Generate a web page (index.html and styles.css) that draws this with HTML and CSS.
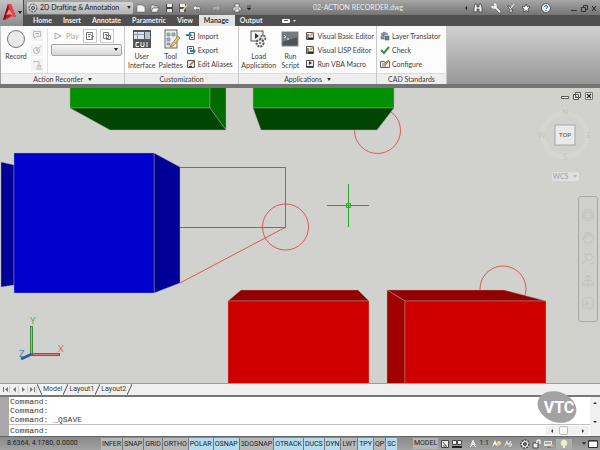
FILE: index.html
```html
<!DOCTYPE html>
<html lang="en">
<head>
    <meta charset="UTF-8">
    <meta name="viewport" content="width=device-width, initial-scale=1.0">
    <title>02-ACTION RECORDER.dwg</title>
    <link rel="stylesheet" href="styles.css">
</head>
<body>

    <header class="header">
        <button class="app-button" aria-label="Application menu">
            <svg width="24" height="25" viewBox="0 0 24 25">
                <path d="M3 19 L8 3 L11 3 L16 16 L12 15 L5 19 Z" fill="#c8202c"/>
                <path d="M3 19 L8 3 L9 10 L6 17 Z" fill="#8e0f18"/>
                <path d="M8 3 L11 3 L16 16 L12 15 Z" fill="#e8434c"/>
                <path d="M6 14 L9 8 L13 15 L10 13 Z" fill="#f4969a"/>
                <path d="M18 10 h4 l-2 3 z" fill="#222"/>
            </svg>
        </button>
        <div class="header-rows">
            <div class="titlebar">
                <div class="workspace">
                    <svg width="10" height="10" viewBox="0 0 10 10" fill="none" stroke="#555"><circle cx="5" cy="5" r="4" stroke-dasharray="2 1"/><circle cx="5" cy="5" r="1.5"/></svg>
                    <select aria-label="Workspace"><option>2D Drafting &amp; Annotation</option></select>
                    <svg width="6" height="4" viewBox="0 0 6 4"><path d="M1 0 h4 l-2 3 z" fill="#333"/></svg>
                </div>
                <div class="quick-access">
                    <button aria-label="New"><svg width="10" height="10" viewBox="0 0 10 10"><path d="M1 2 h5 l3 2 v5 h-8 z" fill="#f2f2f2" stroke="#555" stroke-width=".5"/></svg></button>
                    <button aria-label="Open"><svg width="10" height="10" viewBox="0 0 10 10"><path d="M1 2 h3 l1 1 h3 v2 h-5 l-2 4 z" fill="#ddd" stroke="#444" stroke-width=".5"/><path d="M3 5 h6 l-2 4 h-6 z" fill="#f6f6f6" stroke="#444" stroke-width=".5"/></svg></button>
                    <button aria-label="Save"><svg width="10" height="10" viewBox="0 0 10 10"><rect x="2" y="1" width="7" height="8" fill="#444"/><rect x="3" y="1" width="5" height="3" fill="#eee"/><rect x="3" y="6" width="5" height="3" fill="#ddd"/></svg></button>
                    <button aria-label="Save as"><svg width="10" height="10" viewBox="0 0 10 10"><rect x="1" y="1" width="7" height="8" fill="#555"/><rect x="2" y="1" width="5" height="3" fill="#eee"/><rect x="2" y="6" width="4" height="3" fill="#ddd"/><path d="M5 7 L9 2" stroke="#e6d08a" stroke-width="1.5"/></svg></button>
                    <button aria-label="Undo"><svg width="10" height="10" viewBox="0 0 10 10"><path d="M1 5 L4 2 V4 H8 V8 H7 V6 H4 V8 Z" fill="#f2f2f2" stroke="#555" stroke-width=".5"/></svg></button>
                    <button aria-label="Redo" class="faded"><svg width="10" height="10" viewBox="0 0 10 10"><path d="M9 5 L6 2 V4 H2 V7 H3 V6 H6 V8 Z" fill="#aaa"/></svg></button>
                    <button aria-label="Plot"><svg width="10" height="10" viewBox="0 0 10 10"><path d="M3 4 V1 H7 V4" fill="#fff" stroke="#444" stroke-width=".6"/><rect x="1" y="4" width="8" height="4" rx="1" fill="#eee" stroke="#444" stroke-width=".6"/><rect x="3" y="6" width="4" height="3" fill="#fff" stroke="#444" stroke-width=".6"/></svg></button>
                    <svg width="6" height="6" viewBox="0 0 6 6"><path d="M1 1 h4 M1 3 h4 l-2 2 z" fill="#222" stroke="#222" stroke-width=".6"/></svg>
                </div>
                <h1 class="doc-title">02-ACTION RECORDER.dwg</h1>
                <div class="info-center">
                    <svg width="4" height="6" viewBox="0 0 4 6"><path d="M3 1 v4 l-2 -2 z" fill="#222"/></svg>
                    <button aria-label="Search" class="search"><svg width="10" height="10" viewBox="0 0 10 10"><path d="M1 9 V5 L2 1 H4 V4 H6 V1 H8 L9 5 V9 H6 V6 H4 V9 Z" fill="#eee" stroke="#333" stroke-width=".7"/></svg></button>
                    <button aria-label="Subscription"><svg width="10" height="10" viewBox="0 0 10 10"><path d="M9 9 L4 4" stroke="#444" stroke-width="3"/><path d="M9 9 L3 3" stroke="#f4f4f4" stroke-width="2"/><path d="M1 3 A2 2 0 1 0 3 1" fill="none" stroke="#f4f4f4" stroke-width="1.5"/></svg></button>
                    <button aria-label="Communication"><svg width="10" height="10" viewBox="0 0 10 10"><path d="M2 2 Q2 7 7 7 Z M4 7 L3 9 H7 L6 7" fill="#f4f4f4" stroke="#333" stroke-width=".6"/><path d="M5 5 L8 1" stroke="#f4f4f4"/></svg></button>
                    <button aria-label="Favorites"><svg width="10" height="10" viewBox="0 0 10 10"><path d="M5 1 L6.200 3.700 L9 4 L7 6 L7.500 9 L5 7.500 L2.500 9 L3 6 L1 4 L3.800 3.700 Z" fill="#fff" stroke="#333" stroke-width=".7"/></svg></button>
                    <button aria-label="Help" class="help"><svg width="10" height="10" viewBox="0 0 10 10"><circle cx="5" cy="5" r="4.500" fill="#eef3f8" stroke="#456"/><path d="M3.500 4 Q3.500 2.500 5 2.500 T6.500 4 Q6.500 4.800 5 5.500 V6 M5 7 V8" fill="none" stroke="#2b5a8c"/></svg></button>
                    <div class="window-buttons">
                        <button aria-label="Minimize"><svg width="8" height="8" viewBox="0 0 8 8"><path d="M1 6.500 H7" stroke="#333"/></svg></button>
                        <button aria-label="Restore"><svg width="8" height="8" viewBox="0 0 8 8" fill="none" stroke="#333"><path d="M1.500 3.500 h4 v4 h-4 z M3.500 3 V1.500 H7.500 V5.500 H6"/></svg></button>
                        <button aria-label="Close"><svg width="8" height="8" viewBox="0 0 8 8"><path d="M2 2 L6 7 M6 2 L2 7" stroke="#222"/></svg></button>
                    </div>
                </div>
            </div>
            <nav class="ribbon-tabs">
                <a href="#">Home</a>
                <a href="#">Insert</a>
                <a href="#">Annotate</a>
                <a href="#">Parametric</a>
                <a href="#">View</a>
                <a href="#" class="active">Manage</a>
                <a href="#">Output</a>
                <button aria-label="Minimize ribbon"><svg width="16" height="6" viewBox="0 0 16 6"><rect x="1" y="1" width="8" height="4" rx="1" fill="#fff"/><rect x="3" y="2" width="4" height="1" fill="#555"/><path d="M12 2 h3 l-1.500 2 z" fill="#ddd"/></svg></button>
            </nav>
        </div>
    </header>

    <section class="ribbon">
        <div class="panel recorder">
            <div class="panel-body">
                <button class="large">
                    <svg width="20" height="20" viewBox="0 0 20 20"><circle cx="10" cy="10" r="8.500" fill="#e9e9e9" stroke="#777"/></svg>
                    <span>Record</span>
                </button>
                <div class="record-tools">
                    <button aria-label="Insert message"><svg width="10" height="10" viewBox="0 0 10 10" fill="none" stroke="#bbb"><path d="M1.500 1.500 h7 v5 h-4 l-2 2 v-2 h-1 z M3 3.500 h4"/></svg></button>
                    <button aria-label="Insert base point"><svg width="10" height="10" viewBox="0 0 10 10" fill="none" stroke="#bbb"><circle cx="4.500" cy="5.500" r="3"/><path d="M5 5 L9 1 M5 3 v3 h2"/></svg></button>
                    <button aria-label="Pause for input"><svg width="10" height="10" viewBox="0 0 10 10" fill="none" stroke="#bbb"><path d="M1 1.500 h6 v3 M6 5 l-1 2 h4 l-1 -2 z M4 9 h6"/></svg></button>
                </div>
                <div class="playback">
                    <div class="play-row">
                        <button class="play"><svg width="8" height="8" viewBox="0 0 8 8"><path d="M1 1 L7 4 L1 7 Z" fill="none" stroke="#aaa"/></svg> Play</button>
                        <button class="boxed" aria-label="Preference"><svg width="10" height="10" viewBox="0 0 10 10" fill="none" stroke="#777"><path d="M1.500 1.500 h6 v7 h-6 z M3 3.500 h3 M3 5.500 h2 M7 9 V4 L9 6"/></svg></button>
                        <button class="boxed" aria-label="Manage action macros"><svg width="10" height="10" viewBox="0 0 10 10" fill="none" stroke="#777"><path d="M1.500 1.500 h5 v6 h-5 z M3 3.500 h2 M4.500 4.500 h4 v4 h-4 z M6 6.500 h1"/></svg></button>
                    </div>
                    <div class="macro"><select aria-label="Available action macro"><option></option></select><svg width="6" height="4" viewBox="0 0 6 4"><path d="M1 0 h4 l-2 3 z" fill="#222"/></svg></div>
                </div>
            </div>
            <div class="panel-title">Action Recorder <i class="drop"></i></div>
        </div>

        <div class="panel custom">
            <div class="panel-body">
                <button class="large">
                    <svg width="20" height="20" viewBox="0 0 20 20"><rect x="1" y="1" width="18" height="18" fill="#555"/><rect x="2" y="3" width="10" height="7" fill="#dce3ea"/><rect x="13" y="3" width="5" height="7" fill="#b9c2cb"/><path d="M2 5.500 h10 M5.500 3 v7" stroke="#8a97a5"/><path d="M7 13.500 H4 V17.500 H7 M9 13 V17.500 H12 V13 M15 13 V18" fill="none" stroke="#fff"/></svg>
                    <span>User<br>Interface</span>
                </button>
                <button class="large">
                    <svg width="20" height="20" viewBox="0 0 20 20"><rect x="4" y="1" width="12" height="18" fill="#edf0f3" stroke="#666"/><path d="M6 4 h3 v3 h-3 z M11 4 h3 v3 h-3 z M6 9 h3 v3 h-3 z M6 14 h3 v2 h-3 z" fill="#9fb4c8" stroke="#66788a" stroke-width=".6"/><path d="M10 16 L17 7 L19 9 L12 17 L9 18 Z" fill="#efc56c" stroke="#896827" stroke-width=".7"/></svg>
                    <span>Tool<br>Palettes</span>
                </button>
                <div class="small-list">
                    <button><svg width="10" height="10" viewBox="0 0 10 10"><path d="M3.500 1.500 h5 v7 h-5 z" fill="#e7ecf0" stroke="#666"/><path d="M5 6.500 h2" stroke="#555"/><path d="M0 3 h3 v-2 l3 3 l-3 3 v-2 h-3 z" fill="#2d7fb8"/></svg>Import</button>
                    <button><svg width="10" height="10" viewBox="0 0 10 10"><path d="M1.500 1.500 h6 v7 h-6 z" fill="#e7ecf0" stroke="#666"/><path d="M3 3.500 h3" stroke="#555"/><path d="M4 5 h3 v-2 l3 3 l-3 3 v-2 h-3 z" fill="#2d7fb8"/></svg>Export</button>
                    <button><svg width="10" height="10" viewBox="0 0 10 10"><path d="M1.500 1.500 h7 v7 h-7 z" fill="#e7e7e7" stroke="#555"/><path d="M3 7.500 h3" stroke="#333"/><path d="M4 6 L9 1" stroke="#9a7a3d" stroke-width="1.500"/></svg>Edit Aliases</button>
                </div>
            </div>
            <div class="panel-title">Customization</div>
        </div>

        <div class="panel apps">
            <div class="panel-body">
                <button class="large">
                    <svg width="20" height="20" viewBox="0 0 20 20"><rect x="2" y="2" width="12" height="10" fill="#f2f2f2" stroke="#555"/><path d="M6 4 L10 7 L6 10 Z" fill="#333"/><circle cx="14" cy="9" r="2.500" fill="#ddd" stroke="#555" stroke-width="1.500" stroke-dasharray="2 1"/><circle cx="11" cy="14" r="3.500" fill="#eee" stroke="#555" stroke-width="2" stroke-dasharray="2 1"/><circle cx="11" cy="14" r="1" fill="#555"/></svg>
                    <span>Load<br>Application</span>
                </button>
                <button class="large">
                    <svg width="20" height="20" viewBox="0 0 20 20"><rect x="2" y="3" width="16" height="14" fill="#505357" stroke="#888"/><path d="M2 3 h16 v5 l-16 5 z" fill="#777b80"/><path d="M4 6 L6 8 L4 9 M7 10 h2" fill="none" stroke="#eee"/></svg>
                    <span>Run<br>Script</span>
                </button>
                <div class="small-list">
                    <button><svg width="10" height="10" viewBox="0 0 10 10"><path d="M1.500 1.500 h7 v7 h-7 z" fill="#eee" stroke="#555"/><path d="M3 3 v5 M3 7 h5 v1 h-5" stroke="#333"/><path d="M5 5 L9 1" stroke="#c8a13c" stroke-width="1.500"/></svg>Visual Basic Editor</button>
                    <button><svg width="10" height="10" viewBox="0 0 10 10"><path d="M1.500 1.500 h7 v7 h-7 z" fill="#eee" stroke="#555"/><path d="M3 3 v5 M3 7 h5 v1 h-5" stroke="#333"/><path d="M5 5 L9 1" stroke="#c8a13c" stroke-width="1.500"/></svg>Visual LISP Editor</button>
                    <button><svg width="10" height="10" viewBox="0 0 10 10"><path d="M1.500 1.500 h7 v7 h-7 z" fill="#eee" stroke="#555"/><path d="M4 2 L7 4 L4 6 Z M2 7 h6 v1 h-6 z" fill="#333"/></svg>Run VBA Macro</button>
                </div>
            </div>
            <div class="panel-title">Applications <i class="drop"></i></div>
        </div>

        <div class="panel standards">
            <div class="panel-body">
                <div class="small-list">
                    <button><svg width="10" height="10" viewBox="0 0 10 10"><path d="M1 3 L4 1 L8 3 L4 4 Z M1 5 L4 4 V8 L1 8 Z" fill="#8a98a6" stroke="#556" stroke-width=".5"/><rect x="5" y="5" width="4" height="4" fill="#4a90b8" stroke="#345" stroke-width=".5"/></svg>Layer Translator</button>
                    <button><svg width="10" height="10" viewBox="0 0 10 10"><path d="M1 5 L4 8 L9 2" fill="none" stroke="#2f9440" stroke-width="2"/></svg>Check</button>
                    <button><svg width="10" height="10" viewBox="0 0 10 10"><path d="M.500 2.500 h4 l1 1 l1 -1 h3 v6 h-9 z" fill="#f4f0e4" stroke="#666"/><path d="M2 5 h2 M2 7 h2 M5 3 v5" stroke="#777"/><path d="M5 6 L9 1" stroke="#a5803d" stroke-width="1.500"/></svg>Configure</button>
                </div>
            </div>
            <div class="panel-title">CAD Standards</div>
        </div>
    </section>

    <main class="drawing">
        <svg class="model" viewBox="0 88 600 296" preserveAspectRatio="xMinYMin slice">
            <!-- construction circles, partly behind the solids -->
            <g class="wire">
                <circle cx="377.500" cy="130.500" r="23"/>
                <circle cx="503" cy="289" r="23"/>
            </g>
            <!-- green solids -->
            <g class="solid">
                <path d="M70 86 H210 V108 H70 Z" fill="#009000"/>
                <path d="M210 86 H226 V130 L210 108 Z" fill="#006a00"/>
                <path d="M70 108 H210 L226 130 H110 Z" fill="#004600"/>
                <path d="M253 86 H394 V108 H253 Z" fill="#009000"/>
                <path d="M253 108 H394 L377 130 H261 Z" fill="#004600"/>
            </g>
            <!-- blue solids -->
            <g class="solid">
                <path d="M1 162 L14 165 V285 L1 287 Z" fill="#000096"/>
                <path d="M154 153 L180 167 V283 L154 293 Z" fill="#000096"/>
                <path d="M14 153 H154 V293 H14 Z" fill="#0000cd"/>
            </g>
            <!-- red solids -->
            <g class="solid">
                <path d="M228 301 L241 290 H358 L369 301 Z" fill="#920000"/>
                <path d="M228 301 H369 V386 H228 Z" fill="#cf0000"/>
                <path d="M387 290 H504 L546 301 H405 Z" fill="#920000"/>
                <path d="M387 290 L405 301 V386 H387 Z" fill="#a00000"/>
                <path d="M405 301 H546 V386 H405 Z" fill="#cf0000"/>
            </g>
            <g class="wire">
                <path class="edge" d="M180 167.500 H285.500 V227.500 H180"/>
                <path d="M180 283 L286 227"/>
                <circle cx="285.500" cy="227" r="23"/>
            </g>
            <!-- crosshair -->
            <path d="M327 205.500 H369 M348.500 184 V227 M346.500 203.500 h4 v4 h-4 z" fill="none" stroke="#2ba32b"/>
            <!-- UCS icon -->
            <path d="M31.500 353 V326" stroke="#3e8a3e" stroke-width="3"/>
            <path d="M31.500 353 V327" stroke="#7ccf7c"/>
            <path d="M32 354.500 H60" stroke="#a04040" stroke-width="3"/>
            <path d="M33 354.500 H59" stroke="#e08080"/>
            <path d="M32 354 L21 359" stroke="#2c5d96" stroke-width="3"/>
            <text x="30" y="324" class="ucs" fill="#5fa75f">Y</text>
            <text x="58" y="352" class="ucs" fill="#dc6a6a">X</text>
            <text x="19" y="357" class="ucs" fill="#4c86c4">Z</text>
        </svg>
        <div class="doc-buttons">
            <button aria-label="Minimize drawing"><svg width="8" height="8" viewBox="0 0 8 8"><path d="M.500 4.500 h7 v2 h-7 z" fill="#fff" stroke="#555"/></svg></button>
            <button aria-label="Restore drawing"><svg width="8" height="8" viewBox="0 0 8 8" fill="#eee" stroke="#555"><path d="M2.500 .500 h5 v5 h-5 z M.500 2.500 h5 v5 h-5 z M2 5 h2"/></svg></button>
            <button aria-label="Close drawing"><svg width="8" height="8" viewBox="0 0 8 8"><path d="M.500 .500 h7 v7 h-7 z" fill="#eee" stroke="#777"/><path d="M2 2 L6 6 M6 2 L2 6" stroke="#333" stroke-width="1.500"/></svg></button>
        </div>
        <div class="view-cube">
            <svg width="56" height="56" viewBox="0 0 56 56">
                <circle cx="28" cy="28" r="22" fill="none" stroke="#d5d6d2" stroke-width="5"/>
                <rect x="18" y="18" width="20" height="20" fill="#e9eae9" stroke="#a4a8a8"/>
                <text x="28" y="30" class="cube-face">TOP</text>
                <text x="28" y="8" class="compass">N</text>
                <text x="28" y="53" class="compass">S</text>
                <text x="5" y="31" class="compass">W</text>
                <text x="52" y="31" class="compass">E</text>
            </svg>
            <button class="wcs">WCS <i class="drop"></i></button>
        </div>
        <div class="nav-bar">
            <button aria-label="Steering wheel"><svg width="14" height="14" viewBox="0 0 14 14"><circle cx="7" cy="7" r="5.500"/><path d="M4 4 h6 v6 h-6 z"/></svg></button>
            <button aria-label="Pan"><svg width="14" height="14" viewBox="0 0 14 14"><path d="M4 13 L2 8 L4 8 V3 H6 V2 H8 V3 H10 V4 H12 V9 L10 13 Z M6 3 V7 M8 3 V7 M10 4 V7"/></svg></button>
            <button aria-label="Zoom"><svg width="14" height="14" viewBox="0 0 14 14"><circle cx="8" cy="5" r="3.500"/><path d="M5 8 L2 12 M2 2 h3 M9 12 h3 v-3"/></svg></button>
            <button aria-label="Orbit"><svg width="14" height="14" viewBox="0 0 14 14"><path d="M7 1 V13 M4 4 L7 1 L10 4 M1 9 Q7 14 13 9 M3 7 Q7 5 11 7"/></svg></button>
            <button aria-label="ShowMotion"><svg width="14" height="14" viewBox="0 0 14 14"><path d="M2 2 h10 v10 h-10 z M5 5 L8 7 L5 9 Z"/></svg></button>
        </div>
    </main>

    <nav class="layout-tabs">
        <div class="tab-scroll">
            <button aria-label="First"><svg width="7" height="7" viewBox="0 0 7 7"><path d="M1 1 h1 v5 h-1 z M6 1 v5 L3 3.500 z"/></svg></button>
            <button aria-label="Previous"><svg width="7" height="7" viewBox="0 0 7 7"><path d="M5 1 v5 L2 3.500 z"/></svg></button>
            <button aria-label="Next"><svg width="7" height="7" viewBox="0 0 7 7"><path d="M2 1 v5 L5 3.500 z"/></svg></button>
            <button aria-label="Last"><svg width="7" height="7" viewBox="0 0 7 7"><path d="M5 1 h1 v5 h-1 z M1 1 v5 L4 3.500 z"/></svg></button>
        </div>
        <svg class="slant" width="5" height="11" viewBox="0 0 5 11"><path d="M0 0 L5 11"/></svg>
        <a href="#" class="current">Model</a>
        <svg class="slant" width="5" height="11" viewBox="0 0 5 11"><path d="M5 0 L0 11"/></svg>
        <a href="#">Layout1</a>
        <svg class="slant" width="5" height="11" viewBox="0 0 5 11"><path d="M5 0 L0 11"/></svg>
        <a href="#">Layout2</a>
        <svg class="slant" width="5" height="11" viewBox="0 0 5 11"><path d="M5 0 L0 11"/></svg>
    </nav>

    <section class="command">
        <div class="grip"></div>
        <div class="command-text">
            <div class="history">
                <p>Command:</p>
                <p>Command:</p>
                <p>Command: _QSAVE</p>
            </div>
            <div class="prompt">
                <label for="cmd">Command:</label>
                <input type="text" id="cmd">
                <div class="hscroll">
                    <svg width="4" height="6" viewBox="0 0 4 6"><path d="M3 1 v4 l-2 -2 z" fill="#333"/></svg>
                    <span class="thumb"></span>
                    <svg width="4" height="6" viewBox="0 0 4 6"><path d="M1 1 v4 l2 -2 z" fill="#333"/></svg>
                </div>
            </div>
        </div>
        <div class="vscroll">
            <svg width="6" height="4" viewBox="0 0 6 4"><path d="M1 3 h4 l-2 -2 z" fill="#333"/></svg>
            <svg width="6" height="4" viewBox="0 0 6 4"><path d="M1 1 h4 l-2 2 z" fill="#333"/></svg>
        </div>
        <div class="watermark">
            <svg width="42" height="36" viewBox="0 0 42 36">
                <ellipse cx="21" cy="18" rx="20" ry="15" transform="rotate(22 21 18)" fill="#a3a3a3"/>
                <text x="23" y="24">VTC</text>
            </svg>
        </div>
    </section>

    <footer class="status">
        <output class="coords">8.6364, 4.1780, 0.0000</output>
        <div class="toggles">
            <button>INFER</button>
            <button>SNAP</button>
            <button>GRID</button>
            <button>ORTHO</button>
            <button class="on">POLAR</button>
            <button class="on">OSNAP</button>
            <button>3DOSNAP</button>
            <button class="on">OTRACK</button>
            <button class="on">DUCS</button>
            <button class="on">DYN</button>
            <button>LWT</button>
            <button class="on">TPY</button>
            <button>QP</button>
            <button class="on">SC</button>
        </div>
        <div class="status-right">
            <div class="group">
                <button class="model-button">MODEL</button>
                <button aria-label="Quick view layouts"><svg width="10" height="10" viewBox="0 0 10 10"><path d="M1.500 1.500 h7 v7 h-7 z" fill="#eee" stroke="#444"/><path d="M3 3 L6 7 M3 7 h4" stroke="#555"/></svg></button>
                <button aria-label="Quick view drawings"><svg width="10" height="10" viewBox="0 0 10 10"><path d="M.500 1.500 h4 v4 h-4 z M5.500 1.500 h4 v4 h-4 z" fill="#eee" stroke="#444"/><path d="M0 8 h10" stroke="#222" stroke-width="2"/></svg></button>
            </div>
            <div class="group">
                <button class="scale"><svg width="8" height="10" viewBox="0 0 8 10"><path d="M4 1 V5 L1 8 M4 5 L7 8 M4 2 L2 6 M4 2 L6 6" fill="none" stroke="#fff"/></svg>1:1</button>
                <button aria-label="Annotation visibility"><svg width="10" height="10" viewBox="0 0 10 10"><path d="M4 1 L1 8 L4 5 L7 8 Z" fill="#fff"/><circle cx="8" cy="4" r="2" fill="#f1dc71"/></svg></button>
                <button aria-label="Auto scale"><svg width="10" height="10" viewBox="0 0 10 10"><path d="M4 1 L1 8 L4 5 L7 8 Z" fill="#ddd"/><path d="M8 2 L6 5 H9 L7 8" fill="none" stroke="#eee"/></svg></button>
            </div>
            <div class="group">
                <button aria-label="Workspace switching"><svg width="10" height="10" viewBox="0 0 10 10"><circle cx="5" cy="5" r="4" fill="#eee" stroke="#444" stroke-width="1.500" stroke-dasharray="2 1"/><circle cx="5" cy="5" r="1.500" fill="#888" stroke="#333"/></svg></button>
                <button aria-label="Lock"><svg width="10" height="10" viewBox="0 0 10 10"><path d="M1 4 h5 v5 h-5 z" fill="#eee" stroke="#444"/><path d="M5 4 V2 Q7 0 8 2 V5" fill="none" stroke="#eee" stroke-width="1.500"/></svg></button>
                <button aria-label="Hardware acceleration"><svg width="10" height="10" viewBox="0 0 10 10"><rect x="0" y="2" width="8" height="5" fill="#e2e2e2"/><path d="M1 4 h6 M3 8 h6" stroke="#666"/><circle cx="8" cy="7" r="1.500" fill="#d8b44e"/></svg></button>
                <button aria-label="Isolate objects" class="bulb"><svg width="10" height="10" viewBox="0 0 10 10"><circle cx="5" cy="4" r="3" fill="#f8f4ab" stroke="#ddd"/><path d="M4 7 h2 v2 h-2 z" fill="#eee"/></svg></button>
            </div>
            <div class="group">
                <i class="drop"></i>
                <button aria-label="Clean screen"><svg width="10" height="10" viewBox="0 0 10 10"><path d="M.500 1.500 h9 v7 h-9 z" fill="#fff" stroke="#333"/><path d="M1 2.500 h8" stroke="#888"/></svg></button>
            </div>
        </div>
    </footer>

</body>
</html>
```

FILE: styles.css
```css
* {
    margin: 0;
    padding: 0;
    box-sizing: border-box;
}
body {
    display: flex;
    flex-direction: column;
    height: 100vh;
    overflow: hidden;
    font-family: Lato, "Open Sans", sans-serif;
    font-size: 7px;
    line-height: 9px;
    color: #3c3c3c;
    background-color: #6c6c6c;
}
button, select, input {
    font: inherit;
    color: inherit;
    background: none;
    border: none;
}
select {
    appearance: none;
}
a {
    color: inherit;
    text-decoration: none;
}
svg {
    display: block;
    flex: none;
}
.drop {
    display: inline-block;
    margin-left: 3px;
    border: 2px solid transparent;
    border-top: 3px solid #333;
    border-bottom: none;
    vertical-align: 1px;
}

/* title bar and ribbon tabs */
.header {
    display: flex;
    flex: none;
}
.app-button {
    width: 24px;
    background: linear-gradient(#c4c4c4, #8c8c8c);
    border-right: 1px solid #4c4c4c;
}
.header-rows {
    flex: 1;
    min-width: 0;
}
.titlebar {
    display: flex;
    align-items: center;
    height: 15px;
    padding: 0 2px 0 3px;
    background: linear-gradient(#a6a6a6, #747474);
}
.workspace {
    display: flex;
    align-items: center;
    gap: 2px;
    height: 12px;
    padding: 0 1px;
    background: linear-gradient(#d4d4d4, #b2b2b2);
    border-radius: 2px;
}
.workspace select {
    width: 84px;
    color: #222;
}
.quick-access {
    display: flex;
    align-items: center;
    gap: 4px;
    margin-left: 3px;
}
.quick-access .faded {
    margin: 0 7px 0 5px;
}
.doc-title {
    flex: 1;
    text-align: center;
    font-size: 7px;
    font-weight: normal;
    color: #eee;
}
.info-center {
    display: flex;
    align-items: center;
    gap: 5px;
}
.info-center .search {
    margin-right: 3px;
}
.info-center .help {
    margin-left: 5px;
}
.window-buttons {
    display: flex;
    gap: 2px;
    margin-left: 14px;
}
.ribbon-tabs {
    display: flex;
    align-items: center;
    height: 11px;
    padding-left: 4px;
    background-color: #505050;
    color: #f0f0f0;
    font-weight: bold;
}
.ribbon-tabs a {
    padding: 1px 6px 1px 5px;
}
.ribbon-tabs .active {
    background-color: #e2e2e2;
    color: #333;
}
.ribbon-tabs button {
    margin-left: 12px;
}

/* ribbon panels */
.ribbon {
    display: flex;
    flex: none;
    height: 62px;
    padding: 0 1px;
    background: linear-gradient(#d0d0d0, #989898);
    border-bottom: 4px solid #747474;
}
.panel {
    display: flex;
    flex-direction: column;
    background-color: #fcfcfc;
    border-right: 1px solid #c8c8c8;
}
.panel-body {
    display: flex;
    flex: 1;
    gap: 1px;
    padding: 3px 2px 0;
}
.panel-title {
    height: 11px;
    line-height: 10px;
    text-align: center;
    background-color: #eeeeee;
    border-top: 1px solid #dcdcdc;
}
.recorder {
    width: 124px;
}
.custom {
    width: 114px;
}
.apps {
    width: 138px;
}
.standards {
    width: 70px;
}
.large {
    display: flex;
    flex-direction: column;
    align-items: center;
    gap: 3px;
    min-width: 26px;
    padding: 0 1px;
}
.record-tools {
    display: flex;
    flex-direction: column;
    gap: 3px;
    padding: 0 4px 0 1px;
    border-right: 1px solid #e0e0e0;
}
.record-tools button {
    padding: 1px;
    background-color: #f2f2f2;
}
.playback {
    flex: 1;
    padding: 0 0 0 2px;
}
.play-row {
    display: flex;
    align-items: center;
    gap: 3px;
}
.play {
    display: flex;
    align-items: center;
    gap: 4px;
    margin: 0 1px 0 3px;
    color: #a4a4a4;
}
.boxed {
    padding: 1px;
    border: 1px solid #ccc;
}
.macro {
    display: flex;
    align-items: center;
    height: 12px;
    margin-top: 1px;
    padding-right: 2px;
    background: linear-gradient(#f6f6f6, #d6d6d6);
    border: 1px solid #a4a4a4;
    border-radius: 2px;
}
.macro select {
    flex: 1;
    min-width: 0;
}
.small-list {
    display: flex;
    flex-direction: column;
    gap: 4px;
    padding: 2px 0 0 1px;
}
.small-list button {
    display: flex;
    align-items: center;
    gap: 2px;
    white-space: nowrap;
}

/* drawing area */
.drawing {
    position: relative;
    flex: 1;
    min-height: 0;
    background-color: #d1d2cd;
    border-bottom: 1px solid #9c9c9c;
}
.model {
    width: 100%;
    height: 100%;
}
.solid path {
    stroke: #b0b0a8;
    stroke-width: 0.4;
}
.wire {
    fill: none;
    stroke: #dc3838;
    stroke-width: 0.8;
}
.wire .edge {
    stroke: #f03c3c;
    stroke-width: 1;
}
.ucs {
    font-size: 9px;
}
.doc-buttons {
    position: absolute;
    top: 4px;
    right: 7px;
    display: flex;
    gap: 4px;
}
.view-cube {
    position: absolute;
    top: 19px;
    right: 7px;
    display: flex;
    flex-direction: column;
    align-items: center;
    gap: 9px;
}
.cube-face {
    font-size: 6px;
    font-weight: bold;
    text-anchor: middle;
    fill: #777;
}
.compass {
    font-size: 8px;
    text-anchor: middle;
    fill: #c2c3bf;
}
.wcs {
    width: 27px;
    border-radius: 2px;
    background-color: #dfe0e0;
    color: #9c9ea6;
}
.wcs .drop {
    border-top-color: #b8bac0;
}
.nav-bar {
    position: absolute;
    top: 108px;
    right: 2px;
    display: flex;
    flex-direction: column;
    align-items: center;
    gap: 8px;
    width: 20px;
    height: 126px;
    padding-top: 11px;
    background-color: #cfd0cc;
    border: 1px solid #a8aaa8;
    border-radius: 3px;
}
.nav-bar svg {
    fill: none;
    stroke: #c0c2be;
}

/* model and layout tabs */
.layout-tabs {
    display: flex;
    flex: none;
    height: 11px;
    padding-left: 2px;
    line-height: 11px;
    background-color: #f0f0f0;
    font-family: Roboto, sans-serif;
}
.layout-tabs a {
    padding: 0 1px;
}
.layout-tabs .current {
    background-color: #fff;
}
.tab-scroll {
    display: flex;
    align-items: center;
    gap: 1px;
}
.tab-scroll button {
    border-right: 1px solid #ccc;
}
.tab-scroll path {
    fill: #777;
}
.slant path {
    stroke: #555;
}

/* command line */
.command {
    position: relative;
    display: flex;
    flex: none;
    border-top: 2px solid #777;
    background-color: #fff;
}
.grip {
    width: 9px;
    background-color: #a8a8a8;
}
.command-text {
    flex: 1;
    font-family: "Liberation Mono", monospace;
    font-size: 8px;
}
.history {
    padding: 0 1px;
    border-bottom: 1px solid #c0c0c0;
}
.prompt {
    display: flex;
    align-items: center;
    height: 11px;
    padding: 0 1px;
}
.prompt input {
    flex: 1;
    min-width: 0;
    outline: none;
}
.hscroll {
    display: flex;
    align-items: center;
    gap: 5px;
    padding: 0 4px;
    background-color: #f0f0f0;
}
.hscroll svg:last-child {
    margin-left: 8px;
}
.thumb {
    width: 9px;
    height: 9px;
    border: 1px solid #bbb;
    border-radius: 2px;
    background-color: #fafafa;
}
.vscroll {
    display: flex;
    flex-direction: column;
    justify-content: space-between;
    padding: 4px 2px 12px;
    background-color: #f0f0f0;
}
.watermark {
    position: absolute;
    right: 22px;
    bottom: 11px;
}
.watermark text {
    font-family: "Liberation Sans Narrow", Roboto, sans-serif;
    font-size: 16px;
    font-weight: bold;
    text-anchor: middle;
    fill: #fff;
}

/* status bar */
.status {
    display: flex;
    align-items: center;
    flex: none;
    height: 14px;
    padding-right: 2px;
    background: linear-gradient(#8a8a8a, #a2a2a2);
    border-top: 1px solid #666;
    font-family: Roboto, sans-serif;
    color: #222;
}
.coords {
    flex: none;
    width: 101px;
    padding-left: 7px;
}
.toggles {
    display: flex;
    flex: none;
    gap: 1px;
    background-color: #777;
}
.toggles button {
    padding: 1px;
    line-height: 10px;
    background-color: #b8b8b8;
}
.toggles .on {
    background-color: #b4dcee;
}
.status-right {
    display: flex;
    flex: 1;
    justify-content: space-between;
    margin-left: 16px;
}
.group {
    display: flex;
    align-items: center;
    gap: 2px;
}
.model-button {
    padding: 1px;
    background-color: #b4b4b4;
}
.scale {
    display: flex;
    align-items: center;
    gap: 2px;
}
.bulb {
    padding: 0 3px;
    background-color: #aab0aa;
}
```
